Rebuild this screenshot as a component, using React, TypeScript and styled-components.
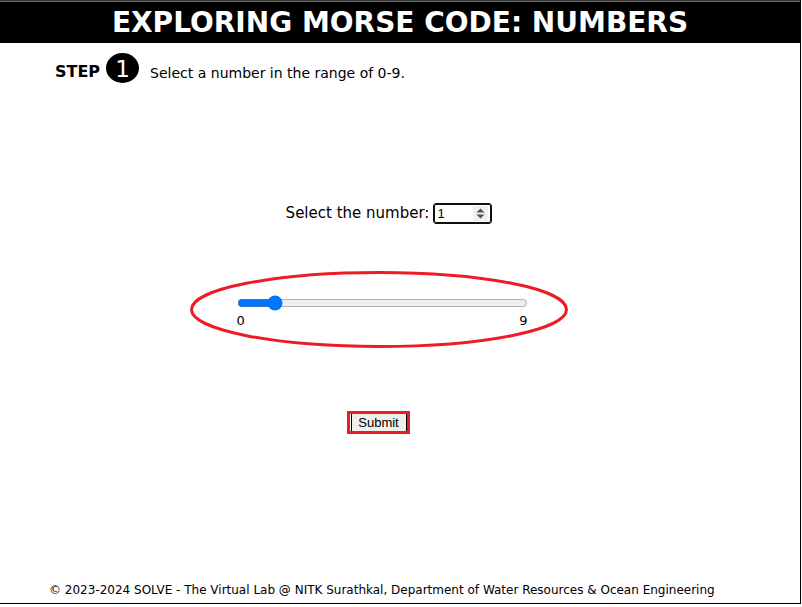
import React, { useState } from "react";
import styled, { createGlobalStyle } from "styled-components";

const GlobalStyle = createGlobalStyle`
  * { box-sizing: border-box; }
  body {
    margin: 0;
    background: #fff;
    color: #000;
    font-family: Verdana, "DejaVu Sans", sans-serif;
  }
`;

const Page = styled.div`
  display: flex;
  flex-direction: column;
  min-height: calc(100vh - 3px);
  margin-right: 1px;
  border-top: 1px solid #333;
  border-right: 1px solid #000;
  border-bottom: 1px solid #000;
`;

const Header = styled.header`
  border-top: 1px solid #666;
  background: #000;
  color: #fff;
`;

const Title = styled.h1`
  margin: 0;
  padding-top: 1px;
  font-size: 28px;
  line-height: 40px;
  text-align: center;
`;

const Step = styled.div`
  display: flex;
  align-items: flex-start;
  padding: 10px 55px 0;
`;

const StepLabel = styled.strong`
  font-size: 16px;
  line-height: 38px;
`;

const StepNumber = styled.span`
  width: 33px;
  height: 30px;
  margin: 0 11px 0 6px;
  border-radius: 50%;
  background: #000;
  color: #fff;
  font-size: 23px;
  line-height: 32px;
  text-align: center;
`;

const Instruction = styled.p`
  margin: 0;
  font-size: 14px;
  line-height: 40px;
`;

const Form = styled.form`
  display: flex;
  flex: 1;
  flex-direction: column;
  align-items: center;
  padding: 110px 43px 0 0;
`;

const NumberField = styled.div`
  display: flex;
  align-items: center;
  gap: 5px;
  margin-left: 20px;
  font-size: 15px;
  line-height: 20px;
`;

const NumberInput = styled.input`
  width: 57px;
  height: 19px;
  padding: 1px 2px;
  border: 1px solid #101010;
  border-radius: 2px;
  outline: 1px solid #101010;
  background: #fff;
  font: 13px/15px Arial, "Liberation Sans", sans-serif;

  &::-webkit-inner-spin-button {
    appearance: none;
    width: 15px;
    height: 15px;
    opacity: 1;
    background: #efefef
      url("data:image/svg+xml,%3Csvg xmlns='http://www.w3.org/2000/svg' width='15' height='15'%3E%3Cpath d='M3.5 6.5 7.5 2.5l4 4zM3.5 8.5l4 4 4-4z' fill='%23505050'/%3E%3C/svg%3E")
      center no-repeat;
  }
`;

const SliderArea = styled.div`
  position: relative;
  display: flex;
  flex-direction: column;
  width: 378px;
  height: 77px;
  margin-top: 48px;
  padding: 24px 40px 0 47px;
`;

const Highlight = styled.svg`
  position: absolute;
  inset: 0;
  width: 100%;
  height: 100%;
  pointer-events: none;
`;

const Slider = styled.input`
  width: 100%;
  height: 16px;
  margin: 0;
  accent-color: #0075ff;
`;

const SliderEnds = styled.div`
  display: flex;
  justify-content: space-between;
  font-size: 13px;
  line-height: 20px;
`;

const Submit = styled.button`
  width: 63px;
  height: 23px;
  margin-top: 63px;
  padding: 0;
  border: 3px solid #ed1c24;
  border-radius: 0;
  background: #efefef;
  box-shadow: inset 1px 0 #fff, inset 2px 0 #000, inset -1px 0 #000;
  color: #000;
  font: 13px/17px Arial, "Liberation Sans", sans-serif;
`;

const Footer = styled.footer`
  padding: 0 49px 3px;
  font-size: 12px;
  line-height: 19px;
`;

export default function App() {
  const [value, setValue] = useState("1");
  const change = (event: React.ChangeEvent<HTMLInputElement>) => setValue(event.target.value);

  return (
    <>
      <GlobalStyle />
      <Page>
        <Header>
          <Title>EXPLORING MORSE CODE: NUMBERS</Title>
        </Header>
        <Step>
          <StepLabel>STEP</StepLabel>
          <StepNumber>1</StepNumber>
          <Instruction>Select a number in the range of 0-9.</Instruction>
        </Step>
        <Form onSubmit={(event) => event.preventDefault()}>
          <NumberField>
            <label htmlFor="number">Select the number:</label>
            <NumberInput id="number" type="number" min={0} max={9} value={value} onChange={change} />
          </NumberField>
          <SliderArea>
            <Highlight viewBox="0 0 378 77" preserveAspectRatio="none" aria-hidden="true">
              <ellipse cx="189" cy="38.5" rx="187.5" ry="37" fill="none" stroke="#ed1c24" strokeWidth="3" />
            </Highlight>
            <Slider type="range" aria-label="Number" min={0} max={9} value={value} onChange={change} />
            <SliderEnds>
              <span>0</span>
              <span>9</span>
            </SliderEnds>
          </SliderArea>
          <Submit type="submit">Submit</Submit>
        </Form>
        <Footer>
          © 2023-2024 SOLVE - The Virtual Lab @ NITK Surathkal, Department of Water Resources &amp; Ocean Engineering
        </Footer>
      </Page>
    </>
  );
}
